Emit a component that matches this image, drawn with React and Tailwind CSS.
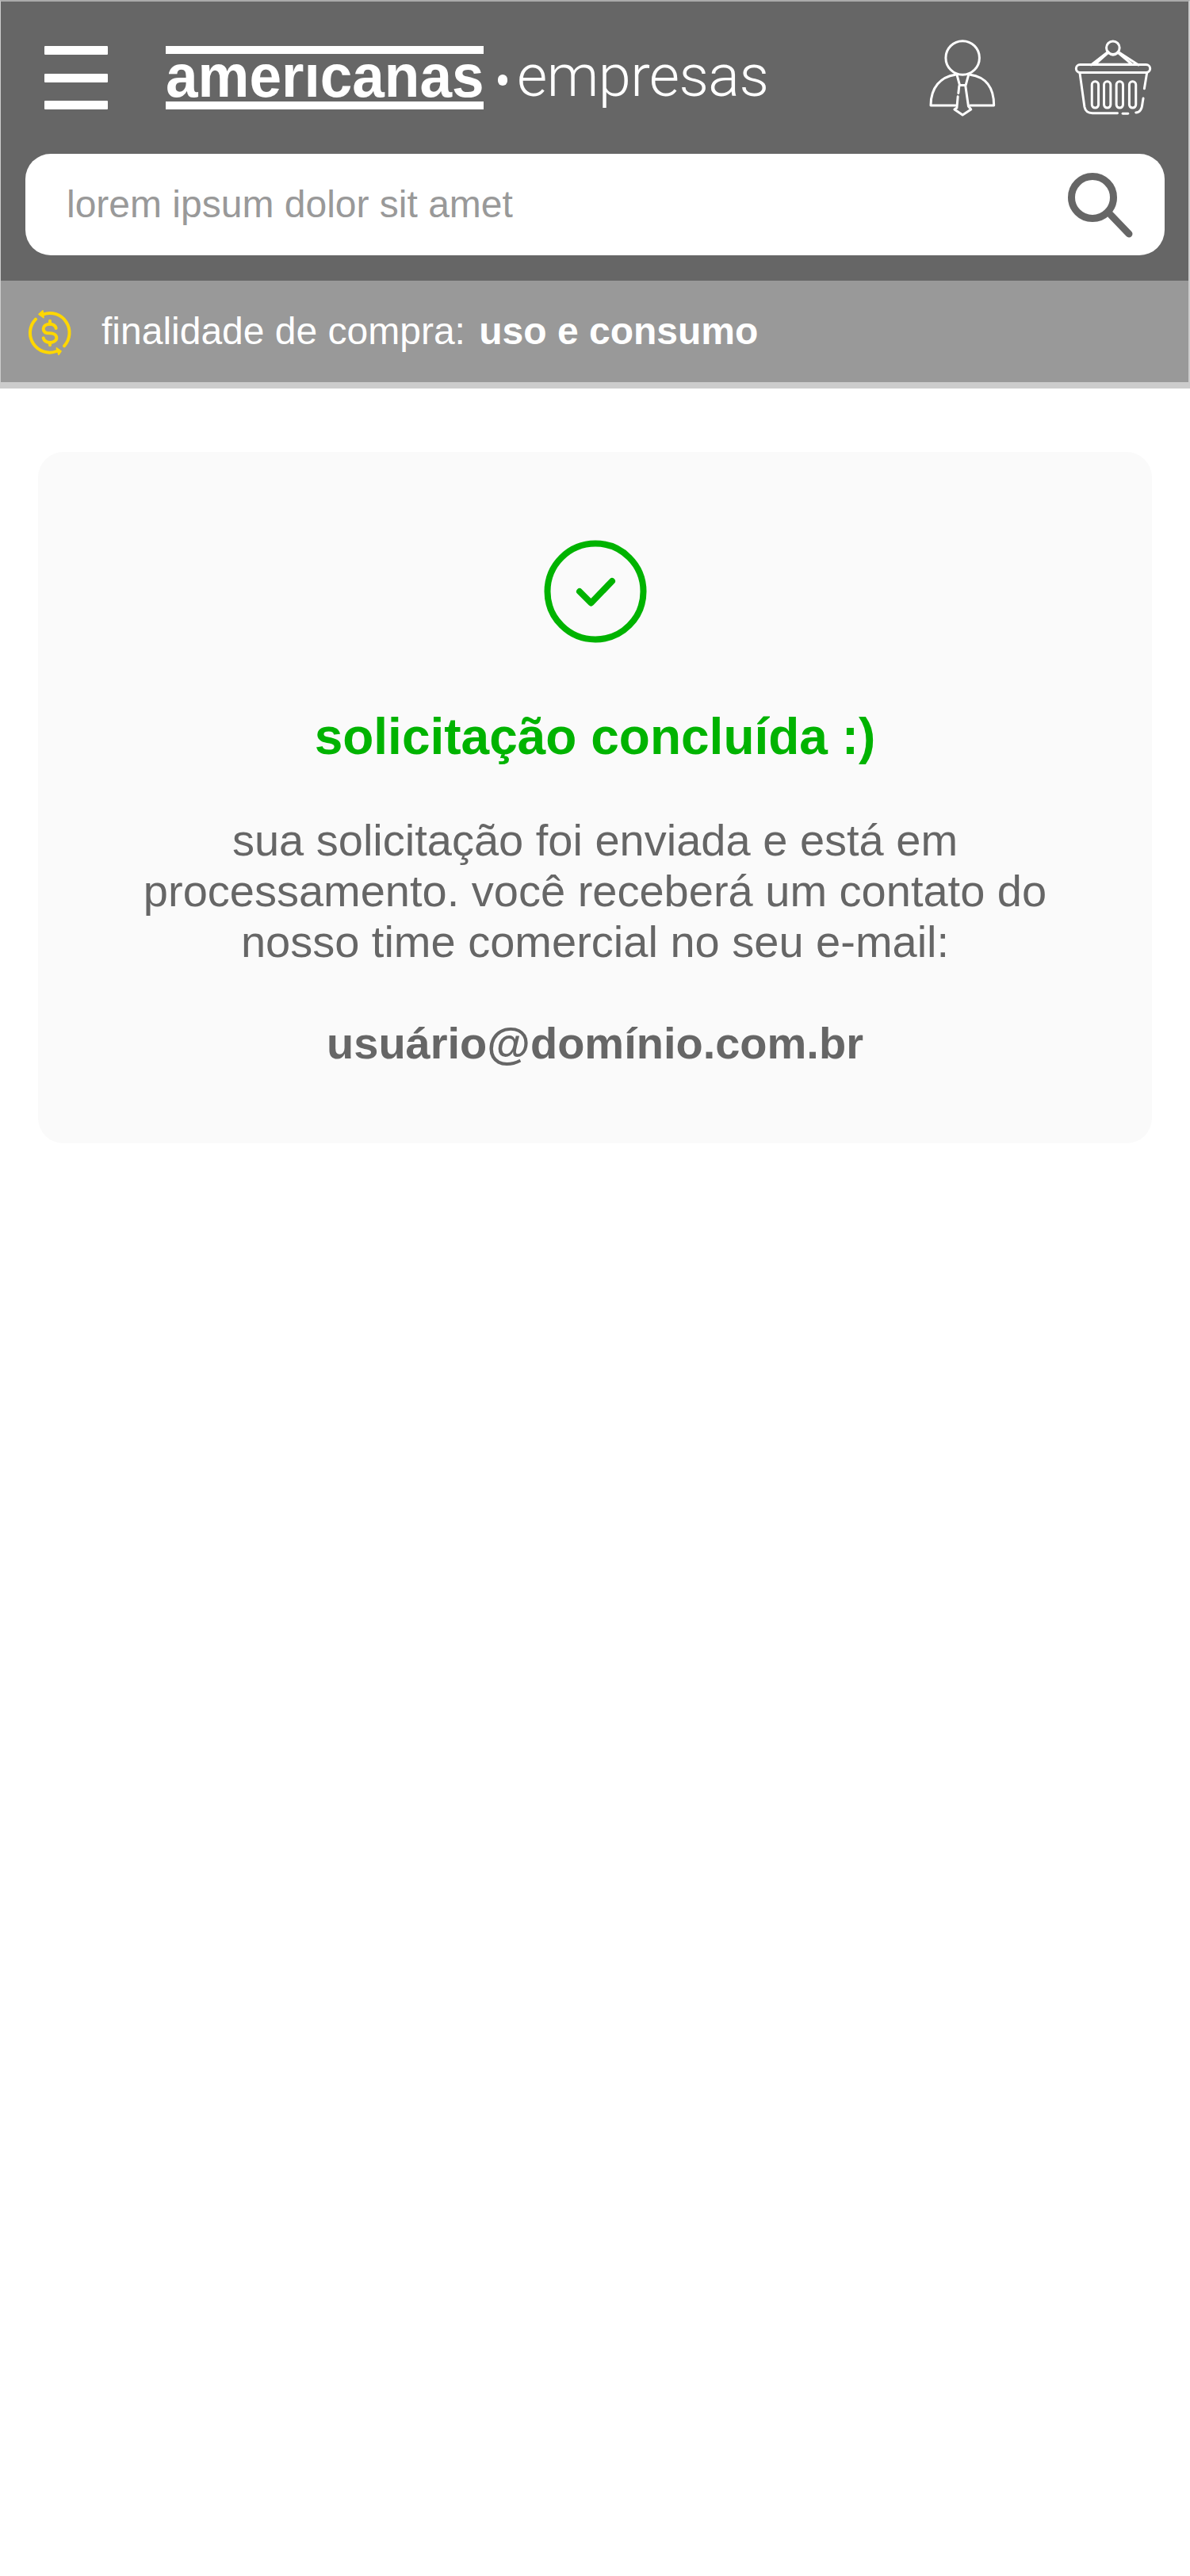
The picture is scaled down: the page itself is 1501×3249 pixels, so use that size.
const sans = "font-['Liberation_Sans',Arial,sans-serif]";

function PersonIcon() {
  return (
    <svg viewBox="60 50 265 310" className="w-[88px] h-[103px]" fill="none" stroke="#fff" strokeWidth="9" strokeLinejoin="round" strokeLinecap="round">
      <circle cx="193" cy="128" r="64" />
      <path d="M165 192C110 200 72 240 72 309H165" />
      <path d="M222 192C280 200 312 240 312 309H222" />
      <path d="M172 195L182 232H205L215 195" />
      <path d="M180 235L177 262M175 275L171 318L162 324L193 345L225 324L215 312L204 235" />
    </svg>
  );
}

function BasketIcon() {
  return (
    <svg viewBox="610 50 310 310" className="w-[103px] h-[103px]" fill="none" stroke="#fff" strokeWidth="9" strokeLinejoin="round" strokeLinecap="round">
      <circle cx="763" cy="90" r="25" />
      <path d="M745 105L680 155M782 105L860 155" />
      <path d="M695 153L745 108Q763 125 782 108L835 153Z" />
      <rect x="623" y="154" width="281" height="30" rx="15" />
      <path d="M637 185L655 315Q660 338 685 338H780" />
      <path d="M800 340H820" />
      <path d="M850 336Q872 335 875 300L878 282M882 245L892 185" />
      <rect x="683" y="218" width="25" height="100" rx="12" />
      <rect x="729" y="218" width="25" height="100" rx="12" />
      <rect x="776" y="218" width="25" height="100" rx="12" />
      <rect x="825" y="218" width="25" height="100" rx="12" />
    </svg>
  );
}

function SearchIcon() {
  return (
    <svg viewBox="0 0 87 87" className="w-[87px] h-[87px]" fill="none" stroke="#666" strokeWidth="9" strokeLinecap="round">
      <circle cx="34" cy="34" r="26.5" />
      <path d="M57 56L80 80" />
    </svg>
  );
}

function MoneyIcon() {
  return (
    <svg viewBox="40 50 180 180" className="w-[60px] h-[60px]" fill="none" stroke="#ffd700" strokeWidth="12" strokeLinecap="round">
      <path d="M76 94A74 74 0 0 0 155 215" />
      <path d="M184 195A74 74 0 0 0 105 75" />
      <path d="M88 75L103 62L106 88Z" fill="#ffd700" stroke="#ffd700" strokeWidth="5" strokeLinejoin="round" />
      <path d="M172 215L155 203L163 228Z" fill="#ffd700" stroke="#ffd700" strokeWidth="5" strokeLinejoin="round" />
      <path d="M153 128C150 115 140 112 130 112C115 112 105 120 105 130C105 145 120 147 130 147C143 147 155 152 155 165C155 175 143 182 130 182C118 182 108 177 105 165" />
      <path d="M130 100V112M130 182V192" />
    </svg>
  );
}

function CheckIcon() {
  return (
    <svg viewBox="0 0 132 132" className="w-[132px] h-[132px]" fill="none" stroke="#00b300" strokeLinecap="round" strokeLinejoin="round">
      <circle cx="66" cy="66" r="60.5" strokeWidth="8" />
      <path d="M46 66L60.5 80.5L87 53" strokeWidth="8" />
    </svg>
  );
}

export default function App() {
  return (
    <div className={`min-h-[3249px] bg-white ${sans}`}>
      <header className="bg-[#666] border-t-2 border-t-[#aaa] border-l border-l-[#ccc] border-r-2 border-r-[#ccc]">
        <div className="h-[192px] flex items-start">
          <div className="ml-[55px] mt-[56px] w-[80px] h-[80px] flex flex-col justify-between">
            <span className="block h-[11px] bg-white rounded-[1px]" />
            <span className="block h-[11px] bg-white rounded-[1px]" />
            <span className="block h-[11px] bg-white rounded-[1px]" />
          </div>
          <div className="ml-[73px] mt-[56px] w-[401px] flex flex-col">
            <span className="block h-[10px] bg-white" />
            <span className="block h-[60px] text-[76px] leading-[56px] font-bold text-white whitespace-nowrap origin-left scale-x-[0.96]">amerıcanas</span>
            <span className="block h-[10px] bg-white" />
          </div>
          <span className="ml-[18px] mt-[92px] w-[12px] h-[14px] rounded-full bg-white" />
          <span className="ml-[12px] mt-[49px] font-['Roboto',sans-serif] font-light text-[74px] leading-[90px] text-white tracking-[-0.6px]">empresas</span>
          <div className="ml-auto mt-[45px] mr-[43px] flex gap-[95px]">
            <PersonIcon />
            <BasketIcon />
          </div>
        </div>
        <div className="pl-[31px] pr-[30px] pb-[32px]">
          <div className="h-[128px] bg-white rounded-[32px] flex items-center pl-[52px] pr-[38px]">
            <span className="text-[48px] text-[#999]">lorem ipsum dolor sit amet</span>
            <span className="ml-auto"><SearchIcon /></span>
          </div>
        </div>
      </header>
      <div className="h-[128px] bg-[#999] flex items-center pl-[32px] border-l border-l-[#ccc] border-r-2 border-r-[#ccc]">
        <MoneyIcon />
        <span className="ml-[35px] text-[48px] text-white">finalidade de compra: <b className="ml-[4px] font-bold">uso e consumo</b></span>
      </div>
      <div className="h-[8px] bg-[#ccc]" />
      <main className="mx-[48px] mt-[80px] h-[872px] bg-[#fafafa] rounded-[32px] pt-[110px] flex flex-col items-center text-center">
        <CheckIcon />
        <h1 className="mt-[80px] text-[64px] leading-[74px] font-bold text-[#00b300]">solicitação concluída :)</h1>
        <p className="mt-[62px] text-[56px] leading-[64px] text-[#666]">
          sua solicitação foi enviada e está em<br />
          processamento. você receberá um contato do<br />
          nosso time comercial no seu e-mail:
        </p>
        <p className="mt-[64px] text-[56px] leading-[64px] font-bold text-[#666]">usuário@domínio.com.br</p>
      </main>
    </div>
  );
}
